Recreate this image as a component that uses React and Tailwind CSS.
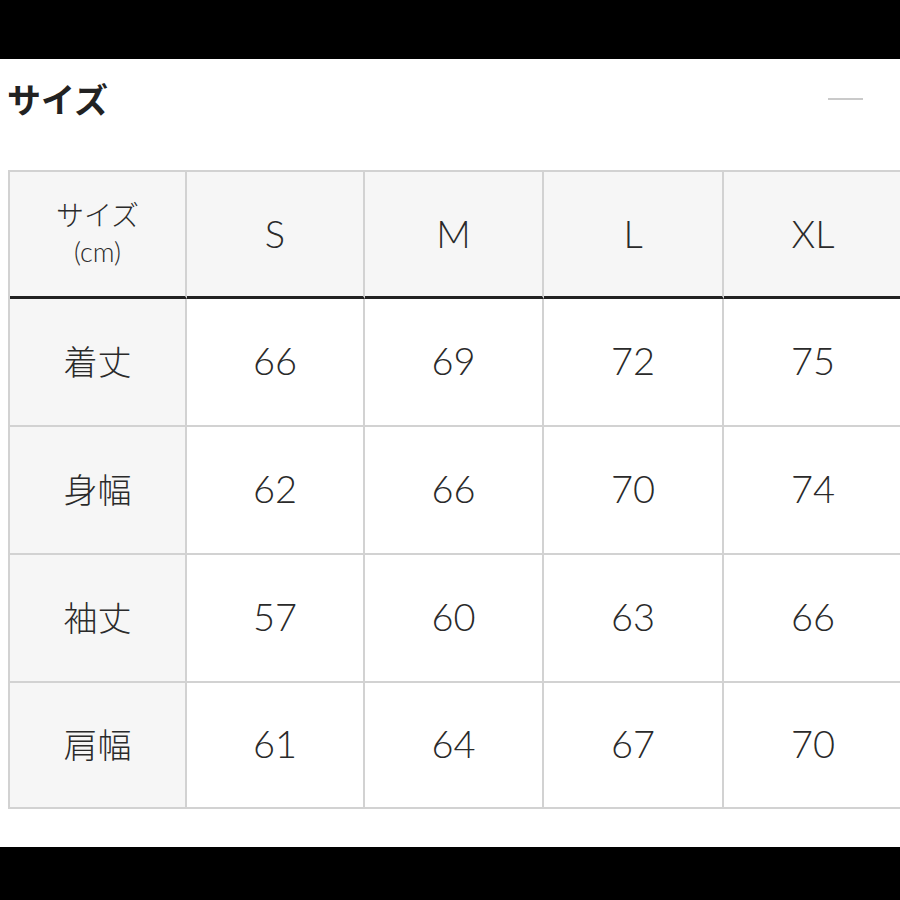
import React from "react";

const cols = ["S", "M", "L", "XL"];
const rows = [
  ["着丈", ["66", "69", "72", "75"]],
  ["身幅", ["62", "66", "70", "74"]],
  ["袖丈", ["57", "60", "63", "66"]],
  ["肩幅", ["61", "64", "67", "70"]],
];
const widths = ["w-[177px]", "w-[178px]", "w-[179px]", "w-[180px]", "w-[180px]"];
const rowH = ["h-[128px]", "h-[128px]", "h-[128px]", "h-[126px]"];

const latin = { fontFamily: "Lato, 'Noto Sans', 'Noto Sans CJK JP', sans-serif" };
const cjk = { fontFamily: "'Noto Sans CJK JP', 'Noto Sans', sans-serif" };

export default function App() {
  return (
    <div className="w-[900px] h-[900px] overflow-hidden flex flex-col bg-white">
      <div className="h-[59px] bg-black shrink-0" />
      <div className="flex-1 flex flex-col">
        <div className="h-[80px] flex items-center justify-between pl-[7px] pr-[37px]">
          <div className="text-[34px] font-bold leading-none text-[#222]" style={cjk}>
            サイズ
          </div>
          <div className="w-[35px] h-[2px] bg-[#cacaca]" />
        </div>
        <div className="mt-[31px] ml-[8px] w-[897px] border-t-2 border-l-2 border-[#d2d2d2] shrink-0">
          <div className="flex">
            <div
              className={`${widths[0]} h-[127px] shrink-0 bg-[#f6f6f6] border-r-2 border-r-[#d2d2d2] border-b-[3px] border-b-[#222] flex flex-col items-center justify-center pb-[2px] text-[#2a2a2a]`}
            >
              <div className="text-[28px] font-light leading-[37px]" style={cjk}>サイズ</div>
              <div className="text-[27px] font-light leading-[37px]" style={latin}>(cm)</div>
            </div>
            {cols.map((c, i) => (
              <div
                key={c}
                className={`${widths[i + 1]} h-[127px] shrink-0 bg-[#f6f6f6] border-r-2 border-r-[#d2d2d2] border-b-[3px] border-b-[#222] flex items-center justify-center pb-[2px] text-[38px] font-light text-[#2a2a2a]`}
                style={latin}
              >
                {c}
              </div>
            ))}
          </div>
          {rows.map(([label, vals], r) => (
            <div key={label} className="flex">
              <div
                className={`${widths[0]} ${rowH[r]} shrink-0 bg-[#f6f6f6] border-r-2 border-b-2 border-[#d2d2d2] flex items-center justify-center pb-[3px] text-[34px] font-light text-[#2a2a2a]`}
                style={cjk}
              >
                {label}
              </div>
              {vals.map((v, i) => (
                <div
                  key={i}
                  className={`${widths[i + 1]} ${rowH[r]} shrink-0 bg-white border-r-2 border-b-2 border-[#d2d2d2] flex items-center justify-center pb-[3px] text-[38px] font-light text-[#2a2a2a]`}
                  style={latin}
                >
                  {v}
                </div>
              ))}
            </div>
          ))}
        </div>
      </div>
      <div className="h-[53px] bg-black shrink-0" />
    </div>
  );
}
